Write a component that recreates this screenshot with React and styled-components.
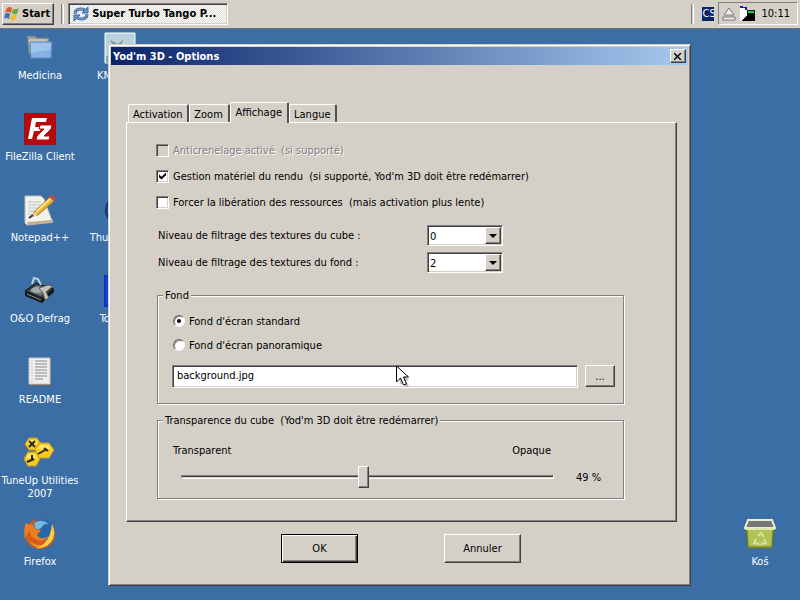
import React, { useState } from 'react'
import styled, { createGlobalStyle, css } from 'styled-components';

const GlobalStyle = createGlobalStyle`
    body {
        margin: 0;
        background: #3a6ea5;
        overflow: hidden;
    }
    * {
        box-sizing: border-box;
    }
    body, button, input, select {
        font-family: "DejaVu Sans Condensed", "DejaVu Sans", sans-serif;
        font-size: 11px;
        line-height: 13px;
    }
`;

const raised = css`
    border: 1px solid;
    border-color: #fff #404040 #404040 #fff;
    box-shadow: inset -1px -1px #808080;
`;

const sunken = css`
    border: 1px solid;
    border-color: #808080 #fff #fff #808080;
    box-shadow: inset 1px 1px #404040, inset -1px -1px #d4d0c8;
`;

const Screen = styled.div`
    display: flex;
    flex-direction: column;
    position: relative;
    min-height: 100vh;
    overflow: hidden;
`;

const Taskbar = styled.header`
    display: flex;
    align-items: center;
    height: 29px;
    padding: 0 2px 1px;
    background: #d4d0c8;
    border-bottom: 1px solid #6d6f70;
`;

const TaskButton = styled.button`
    ${raised}
    display: flex;
    align-items: center;
    gap: 2px;
    height: 22px;
    padding: 0 3px 0 1px;
    font-weight: bold;
    background: #d4d0c8;
    color: #000;
    ${props => props.$pressed && css`
        ${sunken}
        width: 160px;
        gap: 3px;
        padding-left: 4px;
        background: repeating-conic-gradient(#fff 0 25%, #dedbd5 0 50%) 0 0 / 2px 2px;
    `}
`;

const Separator = styled.span`
    width: 3px;
    height: 20px;
    margin: 0 ${props => props.$after}px 0 ${props => props.$before}px;
    border-left: 1px solid #808080;
    border-right: 1px solid #fff;
`;

const Spacer = styled.span`
    flex: 1;
`;

const Language = styled.span`
    width: 12px;
    height: 14px;
    margin-right: 4px;
    overflow: hidden;
    background: #0a246a;
    color: #fff;
`;

const Tray = styled.div`
    display: flex;
    align-items: center;
    gap: 3px;
    height: 23px;
    padding: 0 7px 0 3px;
    border: 1px solid;
    border-color: #808080 #fff #fff #808080;
`;

const Clock = styled.time`
    margin-left: 3px;
`;

const Desktop = styled.main`
    display: grid;
    flex: 1;
    grid-template-columns: 80px 80px 1fr 80px;
    grid-template-rows: repeat(7, 81px);
    padding-top: 3px;
`;

const Shortcut = styled.a`
    display: flex;
    flex-direction: column;
    align-items: center;
    gap: 5px;
    grid-column: ${props => props.$col};
    grid-row: ${props => props.$row};
    color: #fff;
    text-align: center;
    text-decoration: none;
`;

const Dialog = styled.section`
    position: absolute;
    top: 44px;
    left: 108px;
    right: 109px;
    padding: 2px 2px 22px;
    background: #d4d0c8;
    border: 1px solid;
    border-color: #d4d0c8 #404040 #404040 #d4d0c8;
    box-shadow: inset 1px 1px #fff, inset -1px -1px #808080;
`;

const TitleBar = styled.div`
    display: flex;
    align-items: center;
    justify-content: space-between;
    height: 18px;
    padding: 0 2px;
    background: linear-gradient(90deg, #0a246a, #a6caf0);
`;

const Title = styled.h1`
    margin: 0;
    color: #fff;
    font-size: 11px;
    line-height: 13px;
`;

const CloseButton = styled.button`
    ${raised}
    display: grid;
    place-items: center;
    width: 16px;
    height: 14px;
    padding: 0;
    background: #d4d0c8;
`;

const TabList = styled.div`
    display: flex;
    align-items: flex-end;
    margin: 37px 12px 0 17px;
`;

const Tab = styled.button`
    height: 18px;
    min-width: 41px;
    padding: 1px 4px 0;
    background: #d4d0c8;
    border: 1px solid #fff;
    border-right: 2px solid #505050;
    border-bottom: 0;
    border-radius: 2px 2px 0 0;
    color: #000;
    white-space: nowrap;
    ${props => props.$selected && css`
        height: 21px;
        margin-bottom: -1px;
        padding: 0 5px 2px;
        position: relative;
    `}
`;

const Panel = styled.div`
    margin: 0 11px 0 15px;
    padding: 20px 52px 22px 29px;
    border: 1px solid;
    border-color: #fff #404040 #404040 #fff;
    box-shadow: inset -1px -1px #808080;
`;

const CheckRow = styled.label`
    display: flex;
    align-items: center;
    gap: 4px;
    height: 26px;
    margin-top: ${props => props.$first ? '-6px' : '0'};
    color: ${props => props.$disabled ? '#808080' : '#000'};
    text-shadow: ${props => props.$disabled ? '1px 1px #fff' : 'none'};
    white-space: pre;
`;

const Checkbox = styled.input`
    ${sunken}
    appearance: none;
    display: grid;
    place-items: center;
    width: 13px;
    height: 13px;
    margin: 0;
    background: ${props => props.disabled ? '#d4d0c8' : '#fff'};

    &:checked::before {
        content: "";
        width: 7px;
        height: 7px;
        background: #000;
        clip-path: polygon(0 28%, 36% 60%, 100% 0, 100% 40%, 36% 100%, 0 68%);
    }
`;

const SelectRow = styled.div`
    display: flex;
    align-items: center;
    height: 27px;
    padding-left: 2px;
`;

const SelectRows = styled.div`
    margin-top: 7px;
`;

const SelectLabel = styled.label`
    width: 269px;
`;

const SelectBox = styled.div`
    display: grid;
    align-items: center;
    width: 76px;
`;

const Select = styled.select`
    ${sunken}
    appearance: none;
    grid-area: 1 / 1;
    height: 21px;
    padding: 2px 2px 0;
    background: #fff;
    border-radius: 0;
    color: #000;
`;

const SelectArrow = styled.span`
    ${raised}
    display: grid;
    grid-area: 1 / 1;
    place-items: center;
    justify-self: end;
    width: 16px;
    height: 17px;
    margin-right: 2px;
    background: #d4d0c8;
    pointer-events: none;
`;

const Group = styled.fieldset`
    min-width: 0;
    margin: ${props => props.$top}px 0 0 1px;
    padding: ${props => props.$pad};
    border: 1px solid #808080;
    box-shadow: 1px 1px #fff, inset 1px 1px #fff;
`;

const Legend = styled.legend`
    margin-left: -10px;
    padding: 0 2px;
    background: #d4d0c8;
    white-space: pre;
`;

const RadioRow = styled.label`
    display: flex;
    align-items: center;
    gap: 4px;
    height: 24px;
`;

const Radio = styled.input`
    appearance: none;
    display: grid;
    place-items: center;
    width: 12px;
    height: 12px;
    margin: 0;
    background: #fff;
    border: 1px solid;
    border-color: #606060 #f4f4f4 #f4f4f4 #606060;
    border-radius: 50%;
    box-shadow: inset 1px 1px #909090;

    &:checked::before {
        content: "";
        width: 4px;
        height: 4px;
        background: #000;
        border-radius: 50%;
    }
`;

const FileRow = styled.div`
    display: flex;
    gap: 7px;
    margin: 8px 0 0 -1px;
    position: relative;
`;

const TextInput = styled.input`
    ${sunken}
    flex: 1;
    min-width: 0;
    height: 23px;
    padding: 0 4px 2px;
    background: #fff;
`;

const Button = styled.button`
    ${raised}
    width: ${props => props.$small ? 30 : 77}px;
    height: ${props => props.$small ? 22 : 29}px;
    padding: 0;
    background: #d4d0c8;
    color: #000;
    ${props => props.$primary && css`
        border-color: #000;
        box-shadow: inset 1px 1px #fff, inset -1px -1px #404040, inset -2px -2px #808080;
    `}
`;

const Pointer = styled.svg`
    position: absolute;
    top: 0;
    left: 224px;
`;

const RangeEnds = styled.div`
    display: flex;
    justify-content: space-between;
    padding-right: 57px;
`;

const RangeRow = styled.div`
    display: flex;
    align-items: center;
    gap: 22px;
    margin: 9px 5px 0 8px;
`;

const Range = styled.input`
    appearance: none;
    flex: 1;
    min-width: 0;
    height: 22px;
    margin: 0;
    background: none;

    &::-webkit-slider-runnable-track {
        height: 4px;
        border: 1px solid;
        border-color: #808080 #fff #fff #808080;
        background: #404040;
        box-shadow: inset 0 -1px #d4d0c8;
    }

    &::-webkit-slider-thumb {
        ${raised}
        appearance: none;
        width: 11px;
        height: 22px;
        margin-top: -10px;
        background: #d4d0c8;
    }
`;

const Percent = styled.output`
    width: 27px;
    white-space: nowrap;
`;

const Actions = styled.div`
    display: flex;
    justify-content: center;
    gap: 86px;
    margin-top: 12px;
    padding-left: 3px;
`;

const icons = {
    folder: (
        <>
            <path d="M3 4h8l2 2h12v16H5z" fill="#a19f94" stroke="#6d7880" />
            <path d="M5 7h18v4H5z" fill="#c4c2b6" />
            <path d="M6 10h22l-1 16H7z" fill="#86b1e2" stroke="#5f8ec9" />
            <path d="M7 11h20l-1 7L7 21z" fill="#9dc3ee" />
        </>
    ),
    player: (
        <>
            <path d="M1 1h30v30H1z" fill="#b8d2dd" stroke="#fff" />
            <path d="M2 24h28v7H2z" fill="#8ba7b5" />
            <path d="M6 8l8 4 6-5-4 8 5 6-9-4-5 5 2-8z" fill="#7d939d" />
        </>
    ),
    sliver: <path d="M27 16q2 3 2 6h3v-7z" fill="#7b8c62" />,
    filezilla: (
        <>
            <path d="M0 0h32v32H0z" fill="#b80a0a" />
            <path d="M.5.5h31v31H.5z" fill="none" stroke="#701c2c" strokeDasharray="2 2" />
            <path d="M8 5h15l-1 4H12l-1 5h6l-1 4h-6l-2 8H4z" fill="#fff" />
            <path d="M16 12h12l-1 4-7 7h6l-1 4H12l1-4 7-7h-5z" fill="#fff" stroke="#b80a0a" />
        </>
    ),
    notepad: (
        <>
            <path d="M1 2h16l3 3 7 19 2 4-26 3-2-2z" fill="#f3f3ee" stroke="#bcc0be" />
            <path d="M4 8h13M4 11h12M4 14h10M4 17h9M4 20h6" stroke="#b9c0c2" />
            <path d="M3 28l25-2v3L4 31z" fill="#c4b08e" />
            <path d="M10 18L26 3l4 4-16 14-5 1z" fill="#eead33" stroke="#a7752b" />
            <path d="M12 18L26 5" stroke="#ffe38b" strokeWidth="2" />
            <path d="M26 3l2-2 4 3-2 3z" fill="#c64c35" />
            <path d="M10 18l4 3-6 2z" fill="#efd5a2" />
            <path d="M9 21l-4 3" stroke="#333" strokeWidth="2" />
        </>
    ),
    defrag: (
        <>
            <path d="M1 16L12 8l17 6-10 10z" fill="#343a3d" stroke="#111" />
            <path d="M1 16v5l17 7 12-11v-4L18 24z" fill="#15191b" />
            <path d="M5 16l8-6 11 4-7 7z" fill="#6d7678" />
            <ellipse cx="13" cy="15" rx="6" ry="3" fill="#a2adb0" />
            <path d="M8 9l2-6 4 1 3 6" fill="none" stroke="#b9d4d8" strokeWidth="2" />
            <path d="M15 13l9-3 5 1-7 6 3 6-4 2-2-7z" fill="#c5c4b8" stroke="#575b59" />
            <path d="M3 19l14 6" stroke="#8b9190" />
        </>
    ),
    readme: (
        <>
            <path d="M6 4h21v26H6z" fill="#666" />
            <path d="M5 2h21v26H5z" fill="#eee" stroke="#c8c6c0" />
            <path d="M11 5h12M11 8h12M11 11h12M11 14h12M11 17h12M11 20h12M11 23h8" stroke="#888" />
            <path d="M8 4v22" stroke="#aaa" strokeDasharray="1 2" />
        </>
    ),
    tuneup: (
        <>
            <g fill="#f7cb25" stroke="#c79b1c">
                <path d="M5 1h8l4 6-4 6H5L1 7z" />
                <path d="M15 6h10l5 7-5 8H15l-4-8z" />
                <path d="M4 15h8l4 7-4 7H4l-4-7z" />
            </g>
            <path d="M5 3h7l2 4H3zM16 8h8l3 4H13zM4 17h7l2 4H2z" fill="#ffe66b" />
            <path d="M5 4l6 6M11 4l-6 6M14 17l9-5M20 11l4 3M8 18v6M3 25l7-3" stroke="#2b2b12" strokeWidth="2" />
        </>
    ),
    firefox: (
        <>
            <circle cx="16" cy="16" r="15" fill="#d85a16" />
            <circle cx="18" cy="12" r="11" fill="#2868a9" />
            <path d="M10 5q7-5 15 1-5-1-7 3-4 4-7 1z" fill="#79b9dc" />
            <path d="M2 5l3 2 4-1 2 5 6 1-4 5q4 6 12 1-4 7-12 4-8-3-7-11L1 21Q-1 11 2 5z" fill="#ef7c1d" />
            <path d="M28 6q5 10-1 18-6 7-15 6 14-4 16-24z" fill="#ffcf3c" />
            <path d="M3 19q5 10 16 8-9 6-16-8z" fill="#f6a525" />
        </>
    ),
    thunderbird: (
        <>
            <circle cx="16" cy="16" r="14" fill="#24549b" stroke="#17335f" strokeWidth="2" />
            <path d="M4 11q4-7 12-6L7 20z" fill="#6da2d5" />
        </>
    ),
    total: <path d="M1 1h30v30H1z" fill="#1742cb" stroke="#1433c4" strokeWidth="2" />,
    bin: (
        <>
            <path d="M2 8h28l-2 22H4z" fill="#8da034" stroke="#657522" />
            <path d="M4 12h24l-1 16H5z" fill="#b0c354" />
            <path d="M4 2h24l3 8H1z" fill="#777873" stroke="#e9eddb" strokeWidth="2" />
            <path d="M1 10h30v2H1z" fill="#dce8ad" />
            <path d="M14 18l3-3 3 4M20 21l2 4-5 1M15 26l-5-1 2-4" fill="none" stroke="#d5e2a6" strokeWidth="2" />
        </>
    ),
};

const shortcuts = [
    { name: 'Medicina', icon: 'folder', col: 1, row: 1 },
    { name: 'FileZilla Client', icon: 'filezilla', col: 1, row: 2 },
    { name: 'Notepad++', icon: 'notepad', col: 1, row: 3 },
    { name: 'O&O Defrag', icon: 'defrag', col: 1, row: 4 },
    { name: 'README', icon: 'readme', col: 1, row: 5 },
    { name: 'TuneUp Utilities 2007', icon: 'tuneup', col: 1, row: 6 },
    { name: 'Firefox', icon: 'firefox', col: 1, row: 7 },
    { name: 'KMPlayer', icon: 'player', col: 2, row: 1 },
    { name: '', icon: 'sliver', col: 2, row: 2 },
    { name: 'Thunderbird', icon: 'thunderbird', col: 2, row: 3 },
    { name: 'Total CD', icon: 'total', col: 2, row: 4 },
    { name: 'Koš', icon: 'bin', col: 4, row: 7 },
];

const Arrow = () => (
    <SelectArrow>
        <svg width="8" height="4" viewBox="0 0 8 4"><path d="M0 0h8L4 4z" /></svg>
    </SelectArrow>
);

const App = () => {
    const [opacity, setOpacity] = useState(49);

    return (
        <Screen>
            <GlobalStyle />
            <Taskbar>
                <TaskButton>
                    <svg width="16" height="16" viewBox="0 0 16 16">
                        <path d="M3 2q3-2 5 0L7 7Q4 5 1 7z" fill="#e2572b" />
                        <path d="M9 3q3 1 6-1l-2 6q-3 1-5-1z" fill="#6da83f" />
                        <path d="M1 8q3-2 5 0l-1 5q-3-2-5 0z" fill="#436fc0" />
                        <path d="M7 9q3 1 6-1l-2 6q-3 1-5-1z" fill="#f0bd32" />
                    </svg>
                    Start
                </TaskButton>
                <Separator $before={7} $after={4} />
                <TaskButton $pressed>
                    <svg width="16" height="16" viewBox="0 0 16 16">
                        <path d="M0 0h16v16H0z" fill="#e8edf3" />
                        <g fill="none" stroke="#41689c" strokeWidth="3">
                            <path d="M2 8q0-5 6-5 3 0 5 2M14 8q0 5-6 5-3 0-5-2" />
                            <path d="M2 8q0-5 6-5 3 0 5 2M14 8q0 5-6 5-3 0-5-2" stroke="#8fb2dc" strokeWidth="1" />
                        </g>
                        <path d="M15 1v6H9zM1 15V9h6z" fill="#6f96c8" stroke="#41689c" />
                    </svg>
                    Super Turbo Tango P...
                </TaskButton>
                <Spacer />
                <Separator $before={0} $after={8} />
                <Language>CS</Language>
                <Tray>
                    <svg width="14" height="14" viewBox="0 0 14 14">
                        <path d="M7 1l5 7H2zM1 10h12v3H1z" fill="#f1f0eb" stroke="#777" />
                    </svg>
                    <svg width="16" height="16" viewBox="0 0 16 16" shapeRendering="crispEdges">
                        <path d="M1 1h4l4 4v10H1z" fill="#fff" />
                        <path d="M1 0h3v1h4v3H6V2H1z" fill="#1518b4" />
                        <path d="M8 4h8v11H8z" fill="#061a08" />
                        <path d="M2 15l7-7h7v7z" fill="#000" />
                        <path d="M9 5h6v2H9z" fill="#2ec250" />
                    </svg>
                    <Clock>10:11</Clock>
                </Tray>
            </Taskbar>

            <Desktop>
                {shortcuts.map(item => (
                    <Shortcut key={item.icon} href="#" $col={item.col} $row={item.row}>
                        <svg width="32" height="32" viewBox="0 0 32 32">{icons[item.icon]}</svg>
                        {item.name}
                    </Shortcut>
                ))}
            </Desktop>

            <Dialog role="dialog" aria-labelledby="title">
                <TitleBar>
                    <Title id="title">Yod'm 3D - Options</Title>
                    <CloseButton aria-label="Fermer">
                        <svg width="8" height="7" viewBox="0 0 8 7"><path d="M0 0l7 7M7 0L0 7" stroke="#000" strokeWidth="1.4" /></svg>
                    </CloseButton>
                </TitleBar>
                <TabList role="tablist">
                    <Tab role="tab">Activation</Tab>
                    <Tab role="tab">Zoom</Tab>
                    <Tab role="tab" aria-selected="true" $selected>Affichage</Tab>
                    <Tab role="tab">Langue</Tab>
                </TabList>
                <Panel role="tabpanel">
                    <CheckRow $first $disabled>
                        <Checkbox type="checkbox" disabled />
                        {'Anticrenelage activé  (si supporté)'}
                    </CheckRow>
                    <CheckRow>
                        <Checkbox type="checkbox" defaultChecked />
                        {"Gestion matériel du rendu  (si supporté, Yod'm 3D doit être redémarrer)"}
                    </CheckRow>
                    <CheckRow>
                        <Checkbox type="checkbox" />
                        {'Forcer la libération des ressources  (mais activation plus lente)'}
                    </CheckRow>

                    <SelectRows>
                        <SelectRow>
                            <SelectLabel htmlFor="cube">Niveau de filtrage des textures du cube :</SelectLabel>
                            <SelectBox>
                                <Select id="cube" defaultValue="0"><option>0</option><option>1</option><option>2</option></Select>
                                <Arrow />
                            </SelectBox>
                        </SelectRow>
                        <SelectRow>
                            <SelectLabel htmlFor="fond">Niveau de filtrage des textures du fond :</SelectLabel>
                            <SelectBox>
                                <Select id="fond" defaultValue="2"><option>0</option><option>1</option><option>2</option></Select>
                                <Arrow />
                            </SelectBox>
                        </SelectRow>
                    </SelectRows>

                    <Group $top={13} $pad="7px 8px 15px 15px">
                        <Legend>Fond</Legend>
                        <RadioRow><Radio type="radio" name="wallpaper" defaultChecked />Fond d'écran standard</RadioRow>
                        <RadioRow><Radio type="radio" name="wallpaper" />Fond d'écran panoramique</RadioRow>
                        <FileRow>
                            <TextInput aria-label="Image de fond" defaultValue="background.jpg" />
                            <Button $small>...</Button>
                            <Pointer width="16" height="23" viewBox="0 0 16 23">
                                <path d="M2 4l11 11-3 1 3 5-3 1-3-5-3 3z" fill="#000" opacity=".25" />
                                <path d="M.5 1v16l4-4 3 7 3-1-3-7h5z" fill="#fff" stroke="#000" />
                            </Pointer>
                        </FileRow>
                    </Group>

                    <Group $top={10} $pad="17px 15px 10px 15px">
                        <Legend>{"Transparence du cube  (Yod'm 3D doit être redémarrer)"}</Legend>
                        <RangeEnds>
                            <label htmlFor="opacity">Transparent</label>
                            <span>Opaque</span>
                        </RangeEnds>
                        <RangeRow>
                            <Range id="opacity" type="range" value={opacity} onChange={e => setOpacity(e.target.value)} />
                            <Percent htmlFor="opacity">{opacity} %</Percent>
                        </RangeRow>
                    </Group>
                </Panel>
                <Actions>
                    <Button $primary>OK</Button>
                    <Button>Annuler</Button>
                </Actions>
            </Dialog>
        </Screen>
    );
}

export default App;
